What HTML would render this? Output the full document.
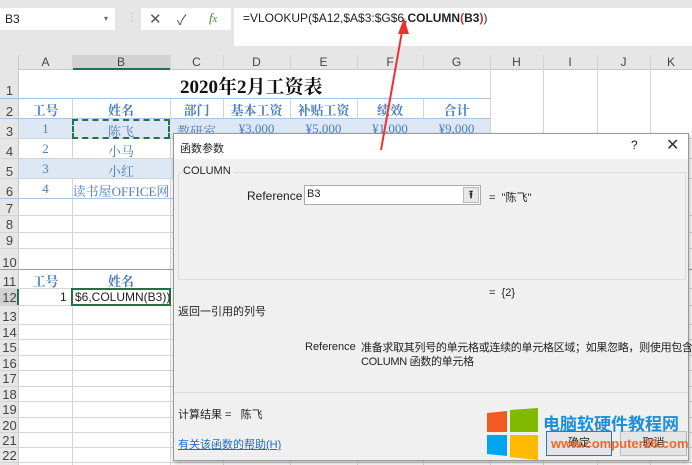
<!DOCTYPE html>
<html><head><meta charset="utf-8"><style>
*{margin:0;padding:0;box-sizing:border-box}
body{width:692px;height:465px;overflow:hidden;background:#fff;font-family:"Liberation Sans","Noto Sans CJK SC",sans-serif;position:relative;font-size:12px;color:#222}
.a{position:absolute}
.serif{font-family:"Liberation Serif","Noto Serif CJK SC",serif}
.hl{position:absolute;left:0;width:692px;height:1px;background:#d4d4d4}
.vl{position:absolute;top:55px;width:1px;height:410px;background:#d4d4d4}
.rn{position:absolute;left:0;width:19px;text-align:center;font-size:13px;color:#444}
.ch{position:absolute;top:55px;height:15px;text-align:center;font-size:12px;color:#444;line-height:15px}
.blue{color:#4a7fc0}
.c{position:absolute;text-align:center;font-size:13px}
.dl{font-size:11px;color:#222;white-space:nowrap}
</style></head><body>
<div class="a" style="left:0;top:0;width:692px;height:55px;background:#e6e6e6"></div>
<div class="a" style="left:0;top:8px;width:115px;height:22px;background:#fff"></div>
<div class="a" style="left:5px;top:12px;font-size:12px">B3</div>
<div class="a" style="left:104px;top:14px;font-size:8px;color:#666">▾</div>
<div class="a" style="left:127px;top:12px;color:#aaa;font-size:10px">⋮</div>
<div class="a" style="left:141px;top:8px;width:90px;height:22px;background:#fff"></div>
<div class="a" style="left:149px;top:10px;font-size:15px;color:#555">✕</div>
<div class="a" style="left:177px;top:10px;font-size:14px;color:#555">✓</div>
<div class="a serif" style="left:209px;top:10px;font-size:13px;font-style:italic;color:#3a8a3a">f<span style="font-size:10px">x</span></div>
<div class="a" style="left:234px;top:8px;width:458px;height:38px;background:#fff"></div>
<div class="a" style="left:243px;top:11px;font-size:12px">=VLOOKUP($A12,$A$3:$G$6,<b>COLUMN</b><b style="color:#c0392b">(</b><b>B3</b><b style="color:#c0392b">)</b>)</div>
<div class="a" style="left:0;top:55px;width:692px;height:15px;background:#e6e6e6;border-bottom:1px solid #c8c8c8"></div>
<div class="a" style="left:72px;top:55px;width:98px;height:15px;background:#d2d2d2;border-bottom:2px solid #217346"></div>
<div class="a" style="left:0;top:55px;width:19px;height:410px;background:#e6e6e6;border-right:1px solid #c8c8c8"></div>
<div class="a" style="left:0;top:289px;width:19px;height:16px;background:#d2d2d2;border-right:2px solid #217346"></div>
<div class="ch" style="left:19px;width:53px">A</div><div class="ch" style="left:72px;width:98px">B</div><div class="ch" style="left:170px;width:53px">C</div><div class="ch" style="left:223px;width:67px">D</div><div class="ch" style="left:290px;width:67px">E</div><div class="ch" style="left:357px;width:66px">F</div><div class="ch" style="left:423px;width:67px">G</div><div class="ch" style="left:490px;width:53px">H</div><div class="ch" style="left:543px;width:54px">I</div><div class="ch" style="left:597px;width:53px">J</div><div class="ch" style="left:650px;width:42px">K</div>
<div class="vl" style="left:72px"></div><div class="vl" style="left:170px"></div><div class="vl" style="left:223px"></div><div class="vl" style="left:290px"></div><div class="vl" style="left:357px"></div><div class="vl" style="left:423px"></div><div class="vl" style="left:490px"></div><div class="vl" style="left:543px"></div><div class="vl" style="left:597px"></div><div class="vl" style="left:650px"></div>
<div class="a" style="left:19px;top:119px;width:471px;height:20px;background:#dde8f4"></div>
<div class="a" style="left:19px;top:159px;width:471px;height:20px;background:#dde8f4"></div>
<div class="a" style="left:19px;top:70px;width:471px;height:28px;background:#fff"></div>
<div class="hl" style="top:98px;background:#a9c4e2;width:490px"></div>
<div class="hl" style="top:118px;background:#a9c4e2;width:490px"></div>
<div class="hl" style="top:138px"></div><div class="hl" style="top:158px"></div><div class="hl" style="top:178px"></div><div class="hl" style="top:198px;background:#a9c4e2;width:490px"></div>
<div class="hl" style="top:215px"></div><div class="hl" style="top:232px"></div><div class="hl" style="top:248px"></div><div class="hl" style="top:269px;background:#7ea6d4"></div><div class="hl" style="top:288px"></div><div class="hl" style="top:305px"></div><div class="hl" style="top:324px"></div><div class="hl" style="top:339px"></div><div class="hl" style="top:355px"></div><div class="hl" style="top:370px"></div><div class="hl" style="top:386px"></div><div class="hl" style="top:401px"></div><div class="hl" style="top:417px"></div><div class="hl" style="top:432px"></div><div class="hl" style="top:447px"></div><div class="hl" style="top:462px"></div>
<div class="rn" style="top:83px">1</div><div class="rn" style="top:104px">2</div><div class="rn" style="top:124px">3</div><div class="rn" style="top:144px">4</div><div class="rn" style="top:164px">5</div><div class="rn" style="top:184px">6</div><div class="rn" style="top:201px">7</div><div class="rn" style="top:217px">8</div><div class="rn" style="top:233px">9</div><div class="rn" style="top:255px">10</div><div class="rn" style="top:274px">11</div><div class="rn" style="top:290px">12</div><div class="rn" style="top:309px">13</div><div class="rn" style="top:325px">14</div><div class="rn" style="top:340px">15</div><div class="rn" style="top:356px">16</div><div class="rn" style="top:371px">17</div><div class="rn" style="top:387px">18</div><div class="rn" style="top:402px">19</div><div class="rn" style="top:418px">20</div><div class="rn" style="top:433px">21</div><div class="rn" style="top:448px">22</div>
<div class="a serif" style="left:180px;top:72px;width:160px;font-size:19px;font-weight:bold;color:#111;white-space:nowrap">2020年2月工资表</div>
<div class="c serif blue" style="left:19px;width:53px;top:100px;font-weight:bold">工号</div>
<div class="c serif blue" style="left:72px;width:98px;top:100px;font-weight:bold">姓名</div>
<div class="c serif blue" style="left:170px;width:53px;top:100px;font-weight:bold">部门</div>
<div class="c serif blue" style="left:223px;width:67px;top:100px;font-weight:bold">基本工资</div>
<div class="c serif blue" style="left:290px;width:67px;top:100px;font-weight:bold">补贴工资</div>
<div class="c serif blue" style="left:357px;width:66px;top:100px;font-weight:bold">绩效</div>
<div class="c serif blue" style="left:423px;width:67px;top:100px;font-weight:bold">合计</div>
<div class="c serif blue" style="left:19px;width:53px;top:121px">1</div><div class="c serif blue" style="left:72px;width:98px;top:121px">陈飞</div><div class="c serif blue" style="left:170px;width:53px;top:121px">教研室</div><div class="c serif blue" style="left:223px;width:67px;top:121px">¥3,000</div><div class="c serif blue" style="left:290px;width:67px;top:121px">¥5,000</div><div class="c serif blue" style="left:357px;width:66px;top:121px">¥1,000</div><div class="c serif blue" style="left:423px;width:67px;top:121px">¥9,000</div>
<div class="c serif blue" style="left:19px;width:53px;top:141px">2</div><div class="c serif blue" style="left:72px;width:98px;top:141px">小马</div>
<div class="c serif blue" style="left:19px;width:53px;top:161px">3</div><div class="c serif blue" style="left:72px;width:98px;top:161px">小红</div>
<div class="c serif blue" style="left:19px;width:53px;top:181px">4</div><div class="c serif blue" style="left:72px;width:98px;top:181px;white-space:nowrap">读书屋OFFICE网</div>
<div class="a" style="left:72px;top:119px;width:98px;height:20px;border:2px dashed #217346"></div>
<div class="c serif blue" style="left:19px;width:53px;top:271px;font-weight:bold">工号</div>
<div class="c serif blue" style="left:72px;width:98px;top:271px;font-weight:bold">姓名</div>
<div class="a" style="left:60px;top:290px;font-size:12px">1</div>
<div class="a" style="left:71px;top:288px;width:100px;height:18px;border:2px solid #217346;background:#fff"></div>
<div class="a" style="left:75px;top:290px;font-size:12px">$6,COLUMN(B3))</div>
<div class="a" style="left:173px;top:133px;width:516px;height:328px;background:#f0f0f0;border:1px solid #999;box-shadow:1px 2px 4px rgba(0,0,0,.3)"></div>
<div class="a" style="left:174px;top:134px;width:514px;height:25px;background:#fff"></div>
<div class="a dl" style="left:180px;top:140px">函数参数</div>
<div class="a" style="left:631px;top:138px;font-size:12px">?</div>
<div class="a" style="left:666px;top:135px;font-size:16px;color:#333">✕</div>
<div class="a" style="left:178px;top:172px;width:508px;height:108px;border:1px solid #dcdcdc"></div>
<div class="a dl" style="left:183px;top:165px;background:#f0f0f0;padding-right:3px;font-size:11px">COLUMN</div>
<div class="a dl" style="left:247px;top:189px;font-size:12px">Reference</div>
<div class="a" style="left:304px;top:185px;width:177px;height:20px;background:#fff;border:1px solid #aaa"></div>
<div class="a dl" style="left:307px;top:188px">B3</div>
<div class="a" style="left:463px;top:187px;width:16px;height:16px;background:#e8e8e8;border:1px solid #bbb;text-align:center;font-size:11px;line-height:14px;font-weight:bold">⭱</div>
<div class="a dl" style="left:489px;top:189px">=&nbsp;&nbsp;"陈飞"</div>
<div class="a dl" style="left:489px;top:287px">=&nbsp;&nbsp;{2}</div>
<div class="a dl" style="left:178px;top:303px">返回一引用的列号</div>
<div class="a dl" style="left:305px;top:341px">Reference</div>
<div class="a dl" style="left:361px;top:341px;line-height:14px;letter-spacing:-0.3px">准备求取其列号的单元格或连续的单元格区域；如果忽略，则使用包含<br>COLUMN 函数的单元格</div>
<div class="a" style="left:174px;top:392px;width:514px;height:1px;background:#dcdcdc"></div>
<div class="a dl" style="left:178px;top:406px">计算结果 =&nbsp;&nbsp;&nbsp;陈飞</div>
<div class="a dl" style="left:178px;top:436px;color:#1a6fc9;text-decoration:underline">有关该函数的帮助(H)</div>
<div class="a" style="left:546px;top:431px;width:66px;height:25px;border:1px solid #2b74d0;background:#e5e5e5;text-align:center;font-size:11px;line-height:23px">确定</div>
<div class="a" style="left:620px;top:431px;width:67px;height:25px;border:1px solid #bbb;background:#e5e5e5;text-align:center;font-size:11px;line-height:23px">取消</div>
<svg class="a" style="left:487px;top:408px" width="52" height="52" viewBox="0 0 52 52">
<polygon points="0,5 20,3 20,24 0,24" fill="#f25a22"/>
<polygon points="23,2 51,0 51,24 23,24" fill="#7fba00"/>
<polygon points="0,27 20,27 20,48 0,46" fill="#00a4ef"/>
<polygon points="23,27 51,27 51,52 23,49" fill="#ffb900"/>
</svg>
<div class="a" style="left:543px;top:410px;font-size:17px;font-weight:bold;color:#1b8fd9;white-space:nowrap">电脑软硬件教程网</div>
<div class="a" style="left:551px;top:436px;font-size:13px;font-weight:bold;color:#f2682a;white-space:nowrap">www.computer26.com</div>
<svg class="a" style="left:0;top:0" width="692" height="465">
<line x1="381" y1="150" x2="403" y2="26" stroke="#f03030" stroke-width="2"/>
<polygon points="404,18 398,34 409,34" fill="#f03030"/>
</svg>
</body></html>
